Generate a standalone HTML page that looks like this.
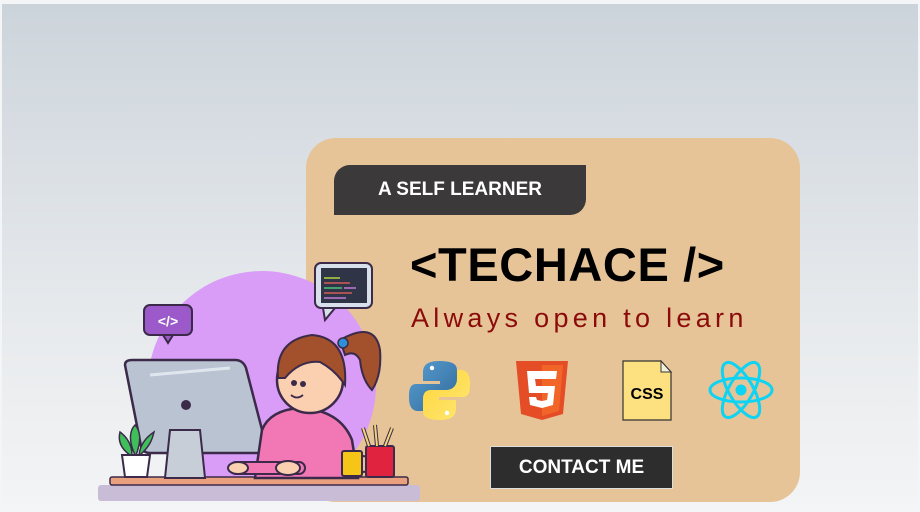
<!DOCTYPE html>
<html><head><meta charset="utf-8"><style>
*{margin:0;padding:0;box-sizing:border-box}
body{width:920px;height:512px;background:#f4f5f6;position:relative;overflow:hidden;font-family:"Liberation Sans",sans-serif}
.bg{position:absolute;left:2px;top:4px;width:916px;height:500px;background:linear-gradient(#ccd4db,#e6e9ec 60%,#f3f4f5)}
.card{position:absolute;left:306px;top:138px;width:494px;height:364px;background:#e6c498;border-radius:30px}
.badge{position:absolute;left:334px;top:165px;width:252px;height:50px;background:#3b393a;border-radius:16px 0 16px 0;color:#fff;font-weight:bold;font-size:19px;line-height:50px;padding-left:44px}
.title{position:absolute;left:410px;top:237px;font-size:47px;font-weight:bold;color:#000;letter-spacing:0.6px}
.sub{position:absolute;left:411px;top:303px;font-size:27px;color:#8b0a0a;letter-spacing:4.3px}
.btn{position:absolute;left:490px;top:446px;width:183px;height:43px;background:#2d2d2d;border:1px solid #ddd;color:#fff;font-weight:bold;font-size:19px;line-height:41px;text-align:center}
svg{position:absolute;left:0;top:0}
</style></head><body>
<div class="bg"></div>
<div class="card"></div>
<div class="badge">A SELF LEARNER</div>
<div class="title">&lt;TECHACE /&gt;</div>
<div class="sub">Always open to learn</div>
<div class="btn">CONTACT ME</div>
<svg width="920" height="512">
<defs><clipPath id="c"><rect x="0" y="0" width="920" height="480"/></clipPath>
<linearGradient id="py1" x1="0" y1="0" x2="1" y2="1"><stop offset="0" stop-color="#5a9fd4"/><stop offset="1" stop-color="#306998"/></linearGradient>
<linearGradient id="py2" x1="0" y1="0" x2="1" y2="1"><stop offset="0" stop-color="#ffd43b"/><stop offset="1" stop-color="#ffe873"/></linearGradient></defs>
<circle cx="262" cy="385" r="114" fill="#d99cf7" clip-path="url(#c)"/>
<rect x="98" y="485" width="322" height="16" rx="3" fill="#c9bcd6"/>
<rect x="110" y="477" width="298" height="8" rx="2" fill="#e8a07f" stroke="#3b2a4a" stroke-width="1.5"/>
<rect x="144" y="305" width="48" height="30" rx="6" fill="#9b59c9" stroke="#3b2a4a" stroke-width="2"/>
<path d="M163 335l5 8 5-8z" fill="#9b59c9" stroke="#3b2a4a" stroke-width="2"/>
<text x="168" y="326" font-size="14" font-weight="bold" fill="#fff" text-anchor="middle" font-family="Liberation Sans">&lt;/&gt;</text>
<rect x="315" y="263" width="57" height="45" rx="6" fill="#d8e0ec" stroke="#3b2a4a" stroke-width="2"/>
<path d="M323 308l2 12 10-12z" fill="#d8e0ec" stroke="#3b2a4a" stroke-width="2"/>
<rect x="321" y="268" width="46" height="35" fill="#2f3447"/>
<g stroke-width="1.5"><line x1="324" y1="278" x2="340" y2="278" stroke="#b6d341"/><line x1="324" y1="283" x2="350" y2="283" stroke="#d25c5c"/><line x1="324" y1="288" x2="342" y2="288" stroke="#4cc47a"/><line x1="344" y1="288" x2="356" y2="288" stroke="#c27ad8"/><line x1="324" y1="293" x2="352" y2="293" stroke="#d25c5c"/><line x1="324" y1="298" x2="346" y2="298" stroke="#c27ad8"/></g>
<path d="M125 365 Q125 360 132 360 L235 360 Q243 360 246 368 L266 445 Q268 453 260 453 L150 453 Q143 453 141 446 Z" fill="#b9c3d1" stroke="#3b2a4a" stroke-width="2.5"/>
<path d="M150 375 L230 368" stroke="#dfe6ee" stroke-width="3"/>
<circle cx="186" cy="405" r="5" fill="#3b2a4a"/>
<path d="M170 430 L200 430 L205 478 L165 478 Z" fill="#c8ced8" stroke="#3b2a4a" stroke-width="2"/>
<path d="M122 455 L150 455 L147 477 L125 477 Z" fill="#fff" stroke="#3b2a4a" stroke-width="2"/>
<path d="M135 455 C128 440 130 430 135 425 C140 430 142 440 136 455 Z M130 455 C120 448 118 440 120 432 C128 438 132 446 132 455Z M140 455 C150 446 152 440 154 432 C145 438 140 446 139 455Z" fill="#3fbf5a" stroke="#3b2a4a" stroke-width="1.5"/>
<path d="M255 478 L262 430 Q270 410 300 408 Q340 410 352 440 L358 478 Z" fill="#f178b5" stroke="#3b2a4a" stroke-width="2.5"/>
<rect x="230" y="462" width="75" height="12" rx="6" fill="#f178b5" stroke="#3b2a4a" stroke-width="2"/>
<ellipse cx="238" cy="468" rx="10" ry="6" fill="#fbd0b0" stroke="#3b2a4a" stroke-width="2"/>
<ellipse cx="288" cy="468" rx="12" ry="7" fill="#fbd0b0" stroke="#3b2a4a" stroke-width="2"/>
<path d="M340 340 Q375 320 380 350 Q382 375 372 390 Q362 380 360 360 Q355 350 345 355 Z" fill="#a3502d" stroke="#3b2a4a" stroke-width="2"/>
<circle cx="343" cy="343" r="5" fill="#2d8fd6" stroke="#3b2a4a" stroke-width="1.5"/>
<circle cx="310" cy="380" r="33" fill="#fbd0b0" stroke="#3b2a4a" stroke-width="2.5"/>
<path d="M278 378 Q275 340 312 335 Q348 338 345 385 Q335 370 320 362 Q300 360 285 378 Z" fill="#a3502d" stroke="#3b2a4a" stroke-width="2"/>
<circle cx="294" cy="383" r="3" fill="#3b2a4a"/><circle cx="303" cy="384" r="3" fill="#3b2a4a"/>
<path d="M291 395 Q297 400 303 395" stroke="#3b2a4a" stroke-width="1.8" fill="none"/>
<rect x="342" y="451" width="20" height="25" rx="2" fill="#f5c518" stroke="#3b2a4a" stroke-width="2"/>
<path d="M362 456 q8 0 8 8 q0 8 -8 8" fill="none" stroke="#3b2a4a" stroke-width="2"/>
<rect x="366" y="446" width="28" height="31" rx="2" fill="#e0243f" stroke="#3b2a4a" stroke-width="2"/>
<path d="M369 446 L363 428 M377 446 L375 425 M385 446 L392 428" stroke="#3b2a4a" stroke-width="4"/>
<path d="M369 446 L363 428 M377 446 L375 425 M385 446 L392 428" stroke="#f2d37a" stroke-width="2"/>
<path d="M439 361 C425 361 423 367 423 373 L423 381 L440 381 L440 384 L416 384 C409 384 409 392 409 398 C409 406 412 411 418 411 L423 411 L423 402 C423 396 427 391 434 391 L449 391 C455 391 457 387 457 382 L457 370 C457 364 452 361 439 361 Z" fill="url(#py1)"/>
<circle cx="432" cy="368" r="2.2" fill="#fff"/>
<path d="M440 420 C454 420 456 414 456 408 L456 400 L439 400 L439 397 L463 397 C470 397 470 389 470 383 C470 375 467 370 461 370 L457 370 L457 379 C457 385 453 390 446 390 L431 390 C425 390 423 394 423 399 L423 411 C423 417 428 420 440 420 Z" fill="url(#py2)"/>
<circle cx="447" cy="413" r="2.2" fill="#fff"/>
<path d="M516 361 L568 361 L563 414 L542 420 L521 414 Z" fill="#e44d26"/>
<path d="M542 365 L563 365 L559 411 L542 416 Z" fill="#f16529"/>
<path d="M527 371 L557 371 L556 379 L535 379 L536 386 L555 386 L553 405 L542 408 L530 405 L529 397 L536 397 L537 400 L542 401 L547 400 L548 393 L529 393 Z" fill="#fff"/>
<path d="M623 361 L661 361 L671 372 L671 420 L623 420 Z" fill="#fde07f" stroke="#333" stroke-width="1.2"/>
<path d="M661 361 L661 372 L671 372 Z" fill="#f3f0e0" stroke="#333" stroke-width="1"/>
<text x="647" y="399" font-size="16" font-weight="bold" text-anchor="middle" fill="#000" font-family="Liberation Sans">CSS</text>
<g transform="translate(741,390)" fill="none" stroke="#0fd3f2" stroke-width="3">
<ellipse rx="31" ry="12"/><ellipse rx="31" ry="12" transform="rotate(60)"/><ellipse rx="31" ry="12" transform="rotate(120)"/>
<circle r="5.5" fill="#0fd3f2" stroke="none"/></g>
</svg>
</body></html>
